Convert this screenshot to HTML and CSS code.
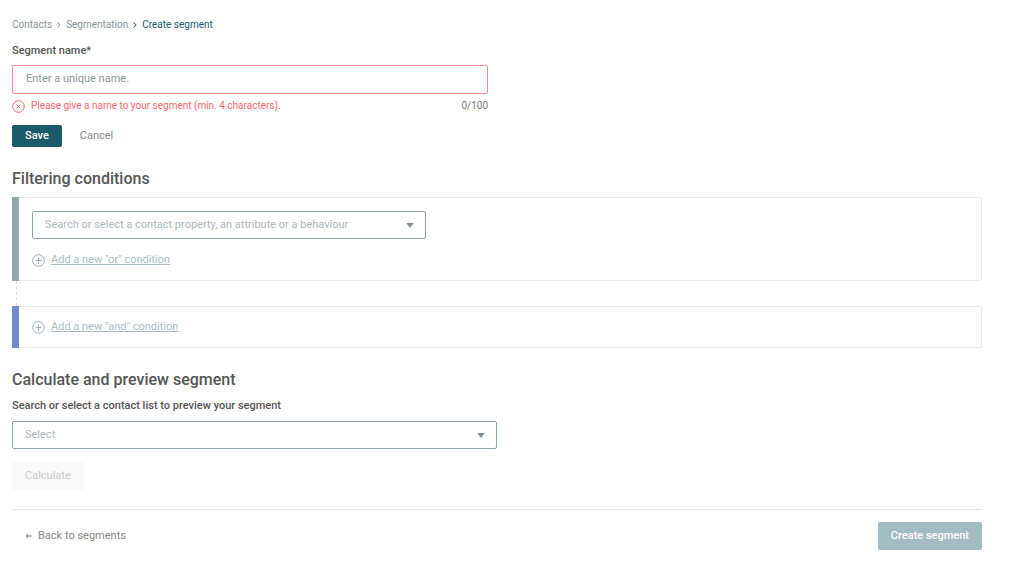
FILE: index.html
```html
<!DOCTYPE html>
<html lang="en">
<head>
  <meta charset="UTF-8">
  <title>Create segment</title>
  <link rel="stylesheet" href="styles.css">
</head>
<body>
  <main class="page">
    <nav class="breadcrumb">
      <a href="#">Contacts</a>
      <svg width="6" height="6" viewBox="0 0 6 6"><path d="M1.5 0.5L4.2 3L1.5 5.5"/></svg>
      <a href="#">Segmentation</a>
      <svg class="current" width="6" height="6" viewBox="0 0 6 6"><path d="M1.5 0.5L4.2 3L1.5 5.5"/></svg>
      <a href="#" class="current">Create segment</a>
    </nav>

    <form>
      <div class="name-field">
        <label for="segmentName" class="label">Segment name*</label>
        <input type="text" id="segmentName" class="name-input" placeholder="Enter a unique name." maxlength="100">
        <div class="name-info">
          <svg class="icon" width="13" height="13" viewBox="0 0 13 13"><circle cx="6.5" cy="6.5" r="5.8"/><path d="M4.5 4.5L8.5 8.5M8.5 4.5L4.5 8.5"/></svg>
          <span class="error">Please give a name to your segment (min. 4 characters).</span>
          <span class="counter">0/100</span>
        </div>
      </div>
      <div class="name-buttons">
        <button type="button" class="btn save-btn">Save</button>
        <button type="button" class="btn cancel-btn">Cancel</button>
      </div>

      <h2>Filtering conditions</h2>
      <div class="condition">
        <div class="bar or-bar"></div>
        <div class="condition-body">
          <div class="select-box property-select">
            <select id="property" aria-label="Contact property">
              <option>Search or select a contact property, an attribute or a behaviour</option>
            </select>
            <svg class="arrow" width="8" height="5" viewBox="0 0 8 5"><path d="M1 0H7Q7.8 0 7.2 0.8L4 5L0.8 0.8Q0.2 0 1 0Z"/></svg>
          </div>
          <a href="#" class="add-link">
            <svg class="icon" width="13" height="13" viewBox="0 0 13 13"><circle cx="6.5" cy="6.5" r="5.8"/><path d="M6.5 3.5V9.5M3.5 6.5H9.5"/></svg>
            <span>Add a new "or" condition</span>
          </a>
        </div>
      </div>
      <div class="connector"></div>
      <div class="condition">
        <div class="bar and-bar"></div>
        <div class="condition-body">
          <a href="#" class="add-link">
            <svg class="icon" width="13" height="13" viewBox="0 0 13 13"><circle cx="6.5" cy="6.5" r="5.8"/><path d="M6.5 3.5V9.5M3.5 6.5H9.5"/></svg>
            <span>Add a new "and" condition</span>
          </a>
        </div>
      </div>

      <h2 class="preview-title">Calculate and preview segment</h2>
      <label for="contactList" class="label">Search or select a contact list to preview your segment</label>
      <div class="select-box list-select">
        <select id="contactList">
          <option>Select</option>
        </select>
        <svg class="arrow" width="8" height="5" viewBox="0 0 8 5"><path d="M1 0H7Q7.8 0 7.2 0.8L4 5L0.8 0.8Q0.2 0 1 0Z"/></svg>
      </div>
      <button type="button" class="btn calculate-btn" disabled>Calculate</button>

      <div class="footer">
        <a href="#" class="back-link">
          <svg width="7" height="6" viewBox="0 0 7 6"><path d="M6.5 3H1.5M3.2 1L1.2 3L3.2 5"/></svg>
          Back to segments
        </a>
        <button type="submit" class="btn create-btn" disabled>Create segment</button>
      </div>
    </form>
  </main>
</body>
</html>
```

FILE: styles.css
```css
* {
  box-sizing: border-box;
}

body {
  margin: 0;
  font-family: Roboto, Arial, sans-serif;
  font-size: 11px;
  line-height: 14px;
  color: #555;
  background-color: #fff;
}

.page {
  padding: 18px 42px 24px 12px;
}

.breadcrumb {
  display: flex;
  align-items: center;
  gap: 4px;
  font-size: 10px;
}

.breadcrumb a {
  color: #84949a;
  text-decoration: none;
}

.breadcrumb svg {
  fill: none;
  stroke: #84949a;
}

.breadcrumb a.current {
  color: #1b5a69;
}

.breadcrumb svg.current {
  stroke: #1b5a69;
}

.label {
  display: block;
  font-weight: 500;
}

.name-field {
  max-width: 476px;
  margin-top: 12px;
}

.name-input {
  display: block;
  width: 100%;
  height: 29px;
  margin-top: 7px;
  padding: 0 13px 2px;
  border: 1px solid #fa8b8f;
  border-radius: 2px;
  font: inherit;
  color: #555;
}

.name-input::placeholder {
  color: #8b979c;
}

.name-info {
  display: flex;
  align-items: center;
  margin-top: 5px;
  font-size: 10px;
}

.icon {
  flex: none;
  fill: none;
  stroke: currentColor;
}

.name-info .icon,
.error {
  color: #f9666b;
}

.error {
  margin-left: 6px;
}

.counter {
  margin-left: auto;
  color: #777;
}

.name-buttons {
  display: flex;
  gap: 5px;
  margin-top: 12px;
}

.btn {
  height: 28px;
  padding: 0 13px;
  border: none;
  border-radius: 2px;
  font: inherit;
  cursor: pointer;
}

.btn:disabled {
  cursor: default;
}

.save-btn,
.cancel-btn {
  height: 22px;
}

.save-btn {
  background-color: #1b5a69;
  color: #fff;
  font-weight: 500;
}

.cancel-btn {
  background: none;
  color: #888;
}

h2 {
  margin: 22px 0 8px;
  font-size: 16px;
  line-height: 20px;
  font-weight: 500;
}

.condition {
  display: flex;
}

.bar {
  flex: none;
  width: 7px;
}

.or-bar {
  background-color: #94a5a5;
}

.and-bar {
  background-color: #748bcb;
}

.condition-body {
  flex: 1;
  padding: 13px;
  border: 1px solid #e9ebeb;
  border-left: none;
  border-radius: 0 2px 2px 0;
}

.select-box {
  position: relative;
}

.select-box select {
  display: block;
  width: 100%;
  height: 28px;
  padding: 0 28px 1px 12px;
  border: 1px solid #8fa1ab;
  border-radius: 2px;
  background-color: #fff;
  color: #abb6bb;
  font: inherit;
  appearance: none;
}

.arrow {
  position: absolute;
  top: 12px;
  right: 12px;
  fill: #7f909a;
  pointer-events: none;
}

.property-select {
  max-width: 394px;
  margin-bottom: 14px;
}

.add-link {
  display: flex;
  align-items: center;
  gap: 6px;
  color: #a5bfc5;
}

.add-link .icon {
  stroke: #93b2b9;
}

.connector {
  height: 25px;
  margin-left: 4px;
  border-left: 1px dashed #d8dcdc;
}

.preview-title {
  margin-bottom: 9px;
}

.list-select {
  max-width: 485px;
  margin: 8px 0 13px;
}

.calculate-btn {
  background-color: #fafafa;
  color: #c5c8c9;
}

.footer {
  display: flex;
  align-items: center;
  justify-content: space-between;
  margin-top: 19px;
  padding-top: 12px;
  border-top: 1px solid #e4e6e6;
}

.back-link {
  display: flex;
  align-items: center;
  gap: 6px;
  padding-left: 13px;
  color: #888;
  text-decoration: none;
}

.back-link svg {
  fill: none;
  stroke: #777;
}

.create-btn {
  background-color: #a3bcc1;
  color: #fff;
  font-weight: 500;
}
```
